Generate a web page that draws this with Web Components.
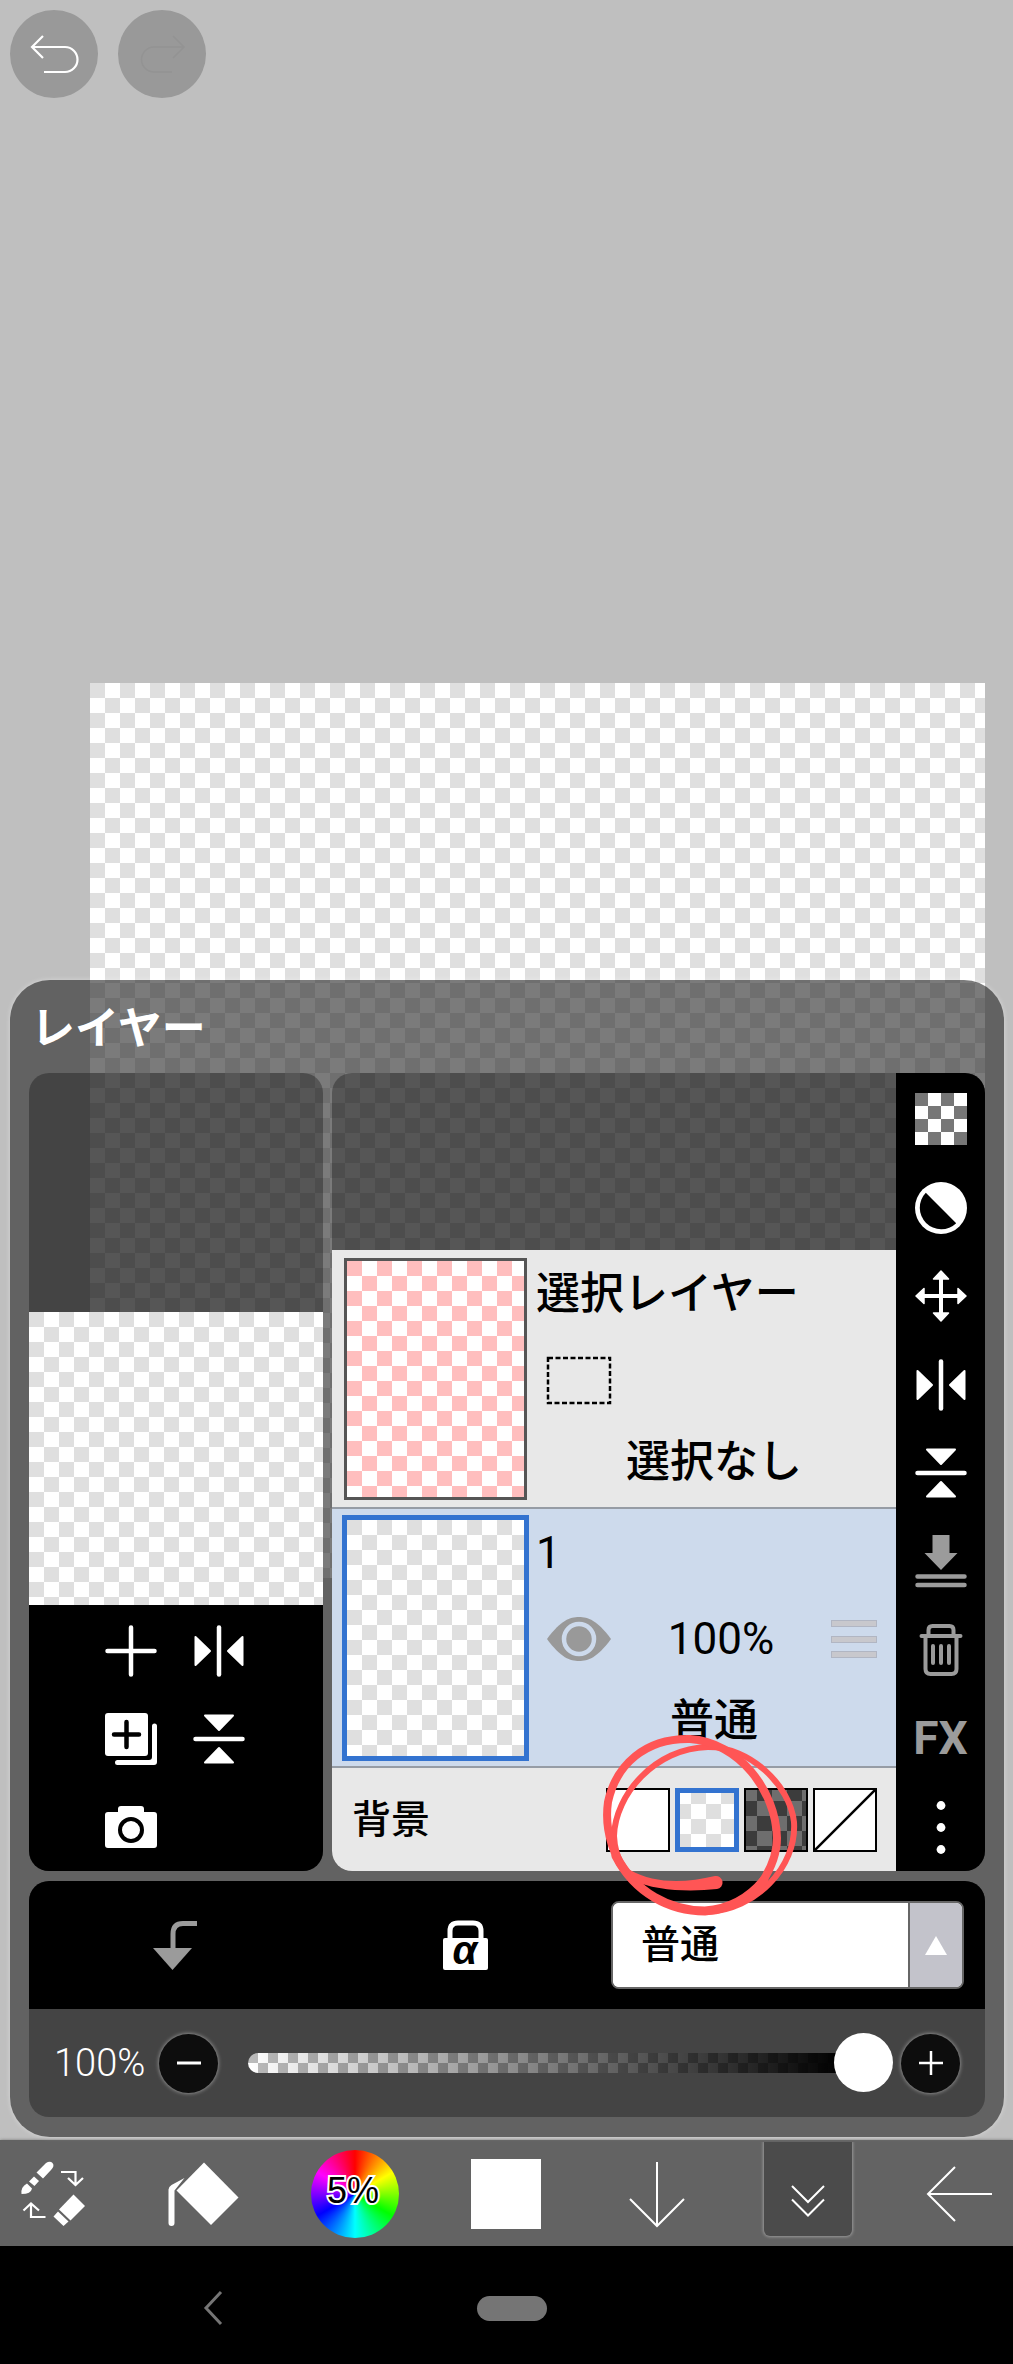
<!DOCTYPE html>
<html lang="ja">
<head>
<meta charset="utf-8">
<meta name="viewport" content="width=device-width, initial-scale=1">
<title>レイヤー</title>
<style>
  html, body {
    margin: 0;
    padding: 0;
  }

  body {
    min-height: 100vh;
    display: flex;
    flex-direction: column;
    background: #bfbfbf;
    font-family: Roboto, "Noto Sans CJK JP", sans-serif;
    color: #000;
  }

  paint-app {
    flex: 1;
  }
</style>
</head>
<body>
<paint-app></paint-app>

<script>
const RESET = `
  * {
    box-sizing: border-box;
  }

  button {
    margin: 0;
    padding: 0;
    border: none;
    background: none;
    color: inherit;
    font: inherit;
    display: flex;
    align-items: center;
    justify-content: center;
  }
`;

const ICONS = {
  undo: [88, 88, `<path d="M33 26 22 37 33 48M22 37H55A12.500 12.500 0 0 1 55 62H34" fill="none" stroke="currentColor" stroke-width="2.200"/>`],
  redo: [88, 88, `<path d="M55 26 66 37 55 48M66 37H36A12.500 12.500 0 0 0 36 62H54" fill="none" stroke="currentColor" stroke-width="1.500"/>`],
  plus: [52, 52, `<path d="M26 2.500V49.500M2.500 26H49.500" stroke="currentColor" stroke-width="4.500" stroke-linecap="round"/>`],
  flipH: [52, 52, `<path d="M26 2.500V49.500" stroke="currentColor" stroke-width="4.500" stroke-linecap="round"/>
    <path d="M2.500 12V40L17 26ZM49.500 12V40L35 26Z" fill="currentColor" stroke="currentColor" stroke-width="2" stroke-linejoin="round"/>`],
  flipV: [52, 52, `<path d="M2.500 26H49.500" stroke="currentColor" stroke-width="4.500" stroke-linecap="round"/>
    <path d="M12 2.500H40L26 17ZM12 49.500H40L26 35Z" fill="currentColor" stroke="currentColor" stroke-width="2" stroke-linejoin="round"/>`],
  duplicate: [52, 52, `<rect width="43" height="43" rx="3" fill="currentColor"/>
    <path d="M21.500 9V34M9 21.500H34" stroke="#000" stroke-width="4.500" stroke-linecap="round"/>
    <path d="M47 13Q47 10.500 49.500 10.500T52 13V49Q52 52 49 52H12.500Q10 52 10 49.500T12.500 47H44Q47 47 47 44Z" fill="currentColor"/>`],
  camera: [52, 52, `<path d="M3 11H13V8Q13 5 16 5H36Q39 5 39 8V11H49Q52 11 52 14V44Q52 47 49 47H3Q0 47 0 44V14Q0 11 3 11Z" fill="currentColor"/>
    <circle cx="26" cy="29" r="11" fill="none" stroke="#000" stroke-width="4"/>`],
  checker: [52, 52, `<path d="M0 0H52V52H0Z" fill="#fff"/>
    <path d="M0 0h13v13h-13zM26 0h13v13h-13zM13 13h13v13h-13zM39 13h13v13h-13zM0 26h13v13h-13zM26 26h13v13h-13zM13 39h13v13h-13zM39 39h13v13h-13z" fill="#777"/>`],
  invert: [52, 52, `<circle cx="26" cy="26" r="26" fill="currentColor"/><path d="M10.800 10.800A21.500 21.500 0 0 0 41.200 41.200Z" fill="#000"/>`],
  move: [52, 52, `<path d="M26 5V47M5 26H47" stroke="currentColor" stroke-width="4"/>
    <path d="M26 1 33.500 9H18.500ZM26 51 33.500 43H18.500ZM1 26 9 18.500V33.500ZM51 26 43 18.500V33.500Z" fill="currentColor" stroke="currentColor" stroke-width="1.500" stroke-linejoin="round"/>`],
  merge: [52, 52, `<path d="M17.500 0H34.500V18H42.500L26 35 9.500 18H17.500Z" fill="currentColor"/>
    <path d="M2.500 41.500H49.500M2.500 50H49.500" stroke="currentColor" stroke-width="4.500" stroke-linecap="round"/>`],
  trash: [52, 52, `<g fill="none" stroke="currentColor" stroke-width="4" stroke-linecap="round">
    <path d="M6.500 12H45.500M13.500 11V6Q13.500 2 17.500 2H34.500Q38.500 2 38.500 6V11M10.500 13V45Q10.500 50 15.500 50H36.500Q41.500 50 41.500 45V13"/>
    <path d="M18 22V39M26 22V39M34 22V39"/></g>`],
  dots: [52, 52, `<g fill="currentColor"><circle cx="26" cy="4.500" r="4.400"/><circle cx="26" cy="26.500" r="4.400"/><circle cx="26" cy="48.500" r="4.400"/></g>`],
  eye: [64, 46, `<path d="M0 23C14 4 23 1 32 1S50 4 64 23C50 42 41 45 32 45S14 42 0 23Z" fill="#999"/>
    <circle cx="32" cy="23" r="15" fill="none" stroke="#cddaec" stroke-width="4.500"/>`],
  marquee: [64, 47, `<rect x="1" y="1" width="62" height="45" fill="none" stroke="#000" stroke-width="2.500" stroke-dasharray="5 2.500"/>`],
  handle: [46, 40, `<g fill="#c8c8cd" stroke="#b1b6c3"><rect x=".5" y="1.500" width="45" height="6"/><rect x=".5" y="17.500" width="45" height="6"/><rect x=".5" y="32.500" width="45" height="6"/></g>`],
  clip: [44, 49, `<path d="M44 2.500H30Q20 2.500 20 13V29" fill="none" stroke="currentColor" stroke-width="5"/><path d="M0 27H39L19.500 49Z" fill="currentColor"/>`],
  alphaLock: [46, 50, `<path d="M7 20V11Q7 3 15 3H30Q38 3 38 11V20" fill="none" stroke="currentColor" stroke-width="5"/>
    <rect y="18" width="45" height="32" rx="2" fill="currentColor"/>
    <text x="22" y="44" text-anchor="middle" font-family="Liberation Sans, sans-serif" font-size="40" font-style="italic" font-weight="700" fill="#000">α</text>`],
  upTriangle: [22, 19, `<path d="M11 0 22 19H0Z" fill="currentColor"/>`],
  minus: [24, 24, `<path d="M0 12H24" stroke="currentColor" stroke-width="3"/>`],
  thinPlus: [24, 24, `<path d="M0 12H24M12 0V24" stroke="currentColor" stroke-width="2.500"/>`],
  swap: [88, 88, `<g fill="currentColor">
      <path d="M37 13Q41 10.500 43.500 13 46 16 42 20L34 28.500 27.500 22.500Z"/>
      <path d="M25 26.500 30 31 25.500 36 20 31.500Z"/>
      <path d="M18 33.500 23 38.500Q22 44 12.500 44 11.500 37 18 33.500Z"/>
      <path d="M64.500 44.500 76 56 61.500 70.500 50 59.500Z"/>
      <path d="M49 61.500 59.500 71.500 54.500 76 44.500 66.500Z"/>
    </g>
    <path d="M52 22H66.500V34M59 28 66.500 35 74 28M36.500 67H22V54M14.500 60.500 22 53.500 30 60.500" fill="none" stroke="currentColor" stroke-width="2.200"/>`],
  bucket: [88, 88, `<path d="M44 12.500 78.500 47.500 51 75 16.500 40.500Z" fill="currentColor"/>
    <path d="M24.500 28 11.500 35Q8.500 37 8.500 39.500V73Q8.500 76 11.500 76T14.500 73V40.500Z" fill="currentColor"/>`],
  down: [88, 88, `<path d="M44 12V76M17 49 44 76 71 49" fill="none" stroke="currentColor" stroke-width="2"/>`],
  chevrons: [88, 88, `<path d="M28 36 44 52 60 36M28 49.500 44 65.500 60 49.500" fill="none" stroke="currentColor" stroke-width="2"/>`],
  back: [88, 88, `<path d="M77 44H13M40 17 13 44 40 71" fill="none" stroke="currentColor" stroke-width="2"/>`],
  navBack: [20, 36, `<path d="M18 2 3 18 18 34" fill="none" stroke="currentColor" stroke-width="3"/>`],
  slash: [60, 60, `<path d="M0 60 60 0" stroke="#000" stroke-width="2.500"/>`],
};

class PaintIcon extends HTMLElement {
  constructor() {
    super();
    this.attachShadow({ mode: "open" });
  }

  connectedCallback() {
    const [w, h, shape] = ICONS[this.getAttribute("name")];
    this.shadowRoot.innerHTML = `
      <style>
        :host { display: block; flex: none; line-height: 0; }
        svg { display: block; overflow: visible; }
      </style>
      <svg width="${w}" height="${h}" viewBox="0 0 ${w} ${h}" aria-hidden="true">${shape}</svg>`;
  }
}

// Transparency grid. --a is the first cell's colour, --b the other one, --cell the size of two cells.
class CheckerBoard extends HTMLElement {
  constructor() {
    super();
    this.attachShadow({ mode: "open" }).innerHTML = `
      <style>
        :host {
          display: block;
          background: repeating-conic-gradient(var(--b, #fff) 0 25%, var(--a, #dfdfdf) 0 50%) 0 0 / var(--cell, 30px) var(--cell, 30px);
        }
      </style>`;
  }
}

class LayerItem extends HTMLElement {
  constructor() {
    super();
    this.attachShadow({ mode: "open" }).innerHTML = `
      <style>
        ${RESET}
        :host {
          display: flex;
          align-items: center;
          gap: 9px;
          height: 259px;
          padding: 0 4px 0 12px;
          background: #e8e8e8;
          border-bottom: 2px solid #969ca5;
          font-size: 44px;
          line-height: 64px;
        }
        :host([selected]) { background: #cddaec; padding-left: 10px; gap: 7px; }
        checker-board {
          width: 183px;
          height: 242px;
          border: 3px solid #555;
          flex: none;
        }
        :host([selected]) checker-board { width: 187px; height: 246px; border: 5px solid #3373d0; }
        :host(:not([selected])) checker-board { --a: #ffbebe; }
        ::slotted(.ja) { font-weight: 500; }
        .info {
          flex: 1;
          height: 100%;
          display: grid;
          grid-template-rows: 88px 84px 80px;
          align-items: center;
        }
        .controls {
          display: flex;
          justify-content: space-between;
          align-items: center;
          padding: 0 15px 0 11px;
        }
        .mode { text-align: center; }
      </style>
      <checker-board></checker-board>
      <div class="info">
        <div><slot name="title"></slot></div>
        <div class="controls"><slot></slot></div>
        <div class="mode"><slot name="mode"></slot></div>
      </div>`;
  }
}

class PreviewCard extends HTMLElement {
  constructor() {
    super();
    this.attachShadow({ mode: "open" }).innerHTML = `
      <style>
        ${RESET}
        :host {
          display: flex;
          flex-direction: column;
          justify-content: flex-end;
          overflow: hidden;
          border-radius: 20px;
          background: rgba(0, 0, 0, .3);
          color: #fff;
        }
        checker-board { height: 293px; }
        .tools {
          display: grid;
          grid-template-columns: 88px 88px;
          grid-auto-rows: 88px;
          justify-content: center;
          height: 266px;
          padding: 2px 2px 0 0;
          background: #000;
        }
      </style>
      <checker-board></checker-board>
      <div class="tools">
        <button aria-label="追加"><paint-icon name="plus"></paint-icon></button>
        <button aria-label="左右反転"><paint-icon name="flipH"></paint-icon></button>
        <button aria-label="複製"><paint-icon name="duplicate"></paint-icon></button>
        <button aria-label="上下反転"><paint-icon name="flipV"></paint-icon></button>
        <button aria-label="カメラ"><paint-icon name="camera"></paint-icon></button>
      </div>`;
  }
}

class LayerList extends HTMLElement {
  constructor() {
    super();
    this.attachShadow({ mode: "open" }).innerHTML = `
      <style>
        ${RESET}
        :host {
          display: flex;
          overflow: hidden;
          border-radius: 20px;
          background: rgba(0, 0, 0, .3);
        }
        .layers {
          flex: 1;
          display: flex;
          flex-direction: column;
          justify-content: flex-end;
        }
        .background {
          display: flex;
          align-items: center;
          gap: 5px;
          height: 103px;
          padding: 0 19px 0 20px;
          background: #e8e8e8;
          font-size: 39px;
          font-weight: 500;
          line-height: 56px;
        }
        .background span { flex: 1; }
        .swatch {
          width: 64px;
          height: 64px;
          border: 2px solid #000;
          background: #fff;
          overflow: hidden;
        }
        .swatch.on { border: 5px solid #3373d0; }
        .swatch checker-board { width: 100%; height: 100%; background-position: -4px -4px; }
        .light { --a: #fff; --b: #dfdfdf; }
        .dark { --a: #6e6e6e; --b: #3c3c3c; }
        .rail {
          width: 89px;
          display: flex;
          flex-direction: column;
          padding-top: 2px;
          background: #000;
          color: #fff;
        }
        .rail button { flex: 1; }
        .rail .off { color: #9b9b9b; }
        .fx { font-size: 46px; font-weight: 700; }
      </style>
      <div class="layers">
        <layer-item>
          <span slot="title" class="ja">選択レイヤー</span>
          <paint-icon name="marquee"></paint-icon>
          <span slot="mode" class="ja">選択なし</span>
        </layer-item>
        <layer-item selected>
          <span slot="title">1</span>
          <paint-icon name="eye"></paint-icon>
          <span>100%</span>
          <paint-icon name="handle"></paint-icon>
          <span slot="mode" class="ja">普通</span>
        </layer-item>
        <div class="background">
          <span>背景</span>
          <button class="swatch" aria-label="白"></button>
          <button class="swatch on" aria-label="透明（明）"><checker-board class="light"></checker-board></button>
          <button class="swatch" aria-label="透明（暗）"><checker-board class="dark"></checker-board></button>
          <button class="swatch" aria-label="なし"><paint-icon name="slash"></paint-icon></button>
        </div>
      </div>
      <div class="rail">
        <button aria-label="透明"><paint-icon name="checker"></paint-icon></button>
        <button aria-label="色反転"><paint-icon name="invert"></paint-icon></button>
        <button aria-label="移動"><paint-icon name="move"></paint-icon></button>
        <button aria-label="左右反転"><paint-icon name="flipH"></paint-icon></button>
        <button aria-label="上下反転"><paint-icon name="flipV"></paint-icon></button>
        <button class="off" aria-label="結合"><paint-icon name="merge"></paint-icon></button>
        <button class="off" aria-label="削除"><paint-icon name="trash"></paint-icon></button>
        <button class="off fx">FX</button>
        <button aria-label="メニュー"><paint-icon name="dots"></paint-icon></button>
      </div>`;
  }
}

class BlendControls extends HTMLElement {
  constructor() {
    super();
    this.attachShadow({ mode: "open" }).innerHTML = `
      <style>
        ${RESET}
        :host {
          display: block;
          overflow: hidden;
          border-radius: 20px;
          background: rgba(0, 0, 0, .3);
          color: #fff;
        }
        .top {
          display: flex;
          align-items: center;
          height: 128px;
          padding-right: 21px;
          background: #000;
        }
        .top > button { flex: 1; }
        .clip { color: #9b9b9b; }
        .mode {
          display: flex;
          width: 353px;
          height: 88px;
          border: 2px solid #666;
          border-radius: 8px;
          overflow: hidden;
          background: #fff;
        }
        select {
          flex: 1;
          margin: 0;
          appearance: none;
          border: none;
          background: #fff;
          color: #000;
          padding: 0 28px;
          font-family: inherit;
          font-size: 39px;
          font-weight: 500;
        }
        .arrow {
          width: 54px;
          display: flex;
          align-items: center;
          justify-content: center;
          border-left: 2px solid #666;
          background: #c3c3cb;
        }
        .bottom {
          display: flex;
          align-items: center;
          height: 108px;
          padding: 0 25px;
        }
        output {
          width: 105px;
          font-size: 38px;
          font-weight: 300;
        }
        .round {
          width: 59px;
          height: 59px;
          border-radius: 50%;
          background: #0d0d0d;
          box-shadow: 0 0 4px #aaa;
        }
        input {
          flex: 1;
          min-width: 0;
          height: 59px;
          margin: 0 8px 0 30px;
          appearance: none;
          background: none;
        }
        input::-webkit-slider-runnable-track {
          height: 20px;
          border-radius: 10px;
          background:
            linear-gradient(90deg, transparent, #000 92%),
            repeating-conic-gradient(#fff 0 25%, #bbb 0 50%) 0 0 / 20px 20px;
        }
        input::-webkit-slider-thumb {
          appearance: none;
          width: 59px;
          height: 59px;
          margin-top: -20px;
          border-radius: 50%;
          background: #fff;
        }
      </style>
      <div class="top">
        <button class="clip" aria-label="クリッピング"><paint-icon name="clip"></paint-icon></button>
        <button aria-label="透明度ロック"><paint-icon name="alphaLock"></paint-icon></button>
        <label class="mode">
          <select aria-label="合成モード"><option>普通</option></select>
          <span class="arrow"><paint-icon name="upTriangle"></paint-icon></span>
        </label>
      </div>
      <div class="bottom">
        <output for="opacity">100%</output>
        <button class="round" aria-label="減らす"><paint-icon name="minus"></paint-icon></button>
        <input id="opacity" type="range" min="0" max="100" value="100" aria-label="不透明度">
        <button class="round" aria-label="増やす"><paint-icon name="thinPlus"></paint-icon></button>
      </div>`;
  }
}

class LayerPanel extends HTMLElement {
  constructor() {
    super();
    this.attachShadow({ mode: "open" }).innerHTML = `
      <style>
        ${RESET}
        :host {
          position: relative;
          display: grid;
          grid-template-columns: 294fr 653fr;
          grid-template-rows: 93px 798px 246px;
          column-gap: 9px;
          padding: 0 19px 20px;
          border-radius: 40px;
          background: rgba(40, 40, 40, .61);
          box-shadow: 0 0 5px rgba(255, 255, 255, .4);
        }
        h1 {
          grid-column: 1 / -1;
          margin: 0;
          padding: 17px 0 0 2px;
          font-size: 44px;
          font-weight: 700;
          line-height: 64px;
          color: #fff;
        }
        blend-controls { grid-column: 1 / -1; margin-top: 10px; }
        .mark {
          position: absolute;
          right: 200px;
          bottom: 216px;
          pointer-events: none;
        }
      </style>
      <h1>レイヤー</h1>
      <preview-card></preview-card>
      <layer-list></layer-list>
      <blend-controls></blend-controls>
      <svg class="mark" width="206" height="190" viewBox="598 1731 206 190" fill="none" stroke="#ff5555" stroke-linecap="round" aria-hidden="true">
        <path stroke-width="6" d="M707 1912C755 1910 797 1868 794 1822C790 1785 750 1747 708 1747C655 1748 615 1795 614 1836C615 1860 627 1875 640 1888"/>
        <path stroke-width="8" d="M632 1878C614 1862 604 1830 608 1802C616 1765 645 1738 690 1739C738 1742 776 1790 777 1838C777 1858 768 1873 762 1882"/>
        <path stroke-width="9" d="M616 1856C635 1893 670 1911 705 1911C730 1909 750 1897 764 1880"/>
        <path stroke="none" fill="#ff5555" d="M630 1870C655 1884 685 1883 715 1876A6.500 6.500 0 0 1 717 1889C690 1892 655 1891 632 1880Z"/>
      </svg>`;
  }
}

class ToolBar extends HTMLElement {
  constructor() {
    super();
    this.attachShadow({ mode: "open" }).innerHTML = `
      <style>
        ${RESET}
        :host {
          display: flex;
          justify-content: space-between;
          align-items: center;
          height: 106px;
          padding: 2px 10px 0 9px;
          background: #636363;
          box-shadow: 0 0 3px #777;
          color: #fff;
        }
        button { width: 88px; height: 88px; }
        .wheel {
          border-radius: 50%;
          background: conic-gradient(#f00, #ff0, #0f0, #0ff, #00f, #f0f, #f00);
          color: #000;
          font-family: "Liberation Sans", sans-serif;
          font-size: 36px;
          -webkit-text-stroke: 4px #fff;
          paint-order: stroke fill;
          padding: 0 4px 6px 0;
        }
        .colour::before {
          content: "";
          width: 70px;
          height: 70px;
          background: #fff;
        }
        .tab {
          align-self: flex-start;
          height: 94px;
          padding-top: 10px;
          border-radius: 0 0 6px 6px;
          background: #4b4b4b;
          box-shadow: 0 0 3px 1px #999;
          clip-path: inset(0 -6px -6px);
        }
      </style>
      <button aria-label="ブラシと消しゴムの切替"><paint-icon name="swap"></paint-icon></button>
      <button aria-label="塗りつぶし"><paint-icon name="bucket"></paint-icon></button>
      <button class="wheel">5%</button>
      <button class="colour" aria-label="色"></button>
      <button aria-label="下へ"><paint-icon name="down"></paint-icon></button>
      <button class="tab" aria-label="レイヤーを閉じる"><paint-icon name="chevrons"></paint-icon></button>
      <button aria-label="戻る"><paint-icon name="back"></paint-icon></button>`;
  }
}

class SystemNav extends HTMLElement {
  constructor() {
    super();
    this.attachShadow({ mode: "open" }).innerHTML = `
      <style>
        ${RESET}
        :host {
          display: grid;
          grid-template-columns: 42% 17% 41%;
          place-items: center;
          height: 118px;
          padding-top: 6px;
          background: #000;
          color: #757575;
        }
        button { height: 48px; }
        .home::before {
          content: "";
          width: 70px;
          height: 25px;
          border-radius: 13px;
          background: #757575;
        }
      </style>
      <button aria-label="戻る"><paint-icon name="navBack"></paint-icon></button>
      <button class="home" aria-label="ホーム"></button>`;
  }
}

class PaintApp extends HTMLElement {
  constructor() {
    super();
    this.attachShadow({ mode: "open" }).innerHTML = `
      <style>
        ${RESET}
        :host {
          display: flex;
          flex-direction: column;
        }
        /* the panel shares the workspace's grid cell and lies over the artboard */
        main {
          flex: 1;
          display: grid;
        }
        .workspace, layer-panel { grid-area: 1 / 1; }
        .workspace { padding: 10px 28px 0 10px; }
        .history { display: flex; gap: 20px; }
        .history button {
          width: 88px;
          height: 88px;
          border-radius: 50%;
          background: #999;
          color: #fff;
        }
        .history button:disabled { color: #939393; }
        .artboard {
          margin: 585px 0 0 80px;
          aspect-ratio: 1;
        }
        layer-panel { align-self: end; margin: 0 9px 3px 10px; }
      </style>
      <main>
        <div class="workspace">
          <div class="history">
            <button aria-label="元に戻す"><paint-icon name="undo"></paint-icon></button>
            <button aria-label="やり直し" disabled><paint-icon name="redo"></paint-icon></button>
          </div>
          <checker-board class="artboard"></checker-board>
        </div>
        <layer-panel></layer-panel>
      </main>
      <tool-bar></tool-bar>
      <system-nav></system-nav>`;
  }
}

customElements.define("paint-icon", PaintIcon);
customElements.define("checker-board", CheckerBoard);
customElements.define("layer-item", LayerItem);
customElements.define("preview-card", PreviewCard);
customElements.define("layer-list", LayerList);
customElements.define("blend-controls", BlendControls);
customElements.define("layer-panel", LayerPanel);
customElements.define("tool-bar", ToolBar);
customElements.define("system-nav", SystemNav);
customElements.define("paint-app", PaintApp);
</script>
</body>
</html>
